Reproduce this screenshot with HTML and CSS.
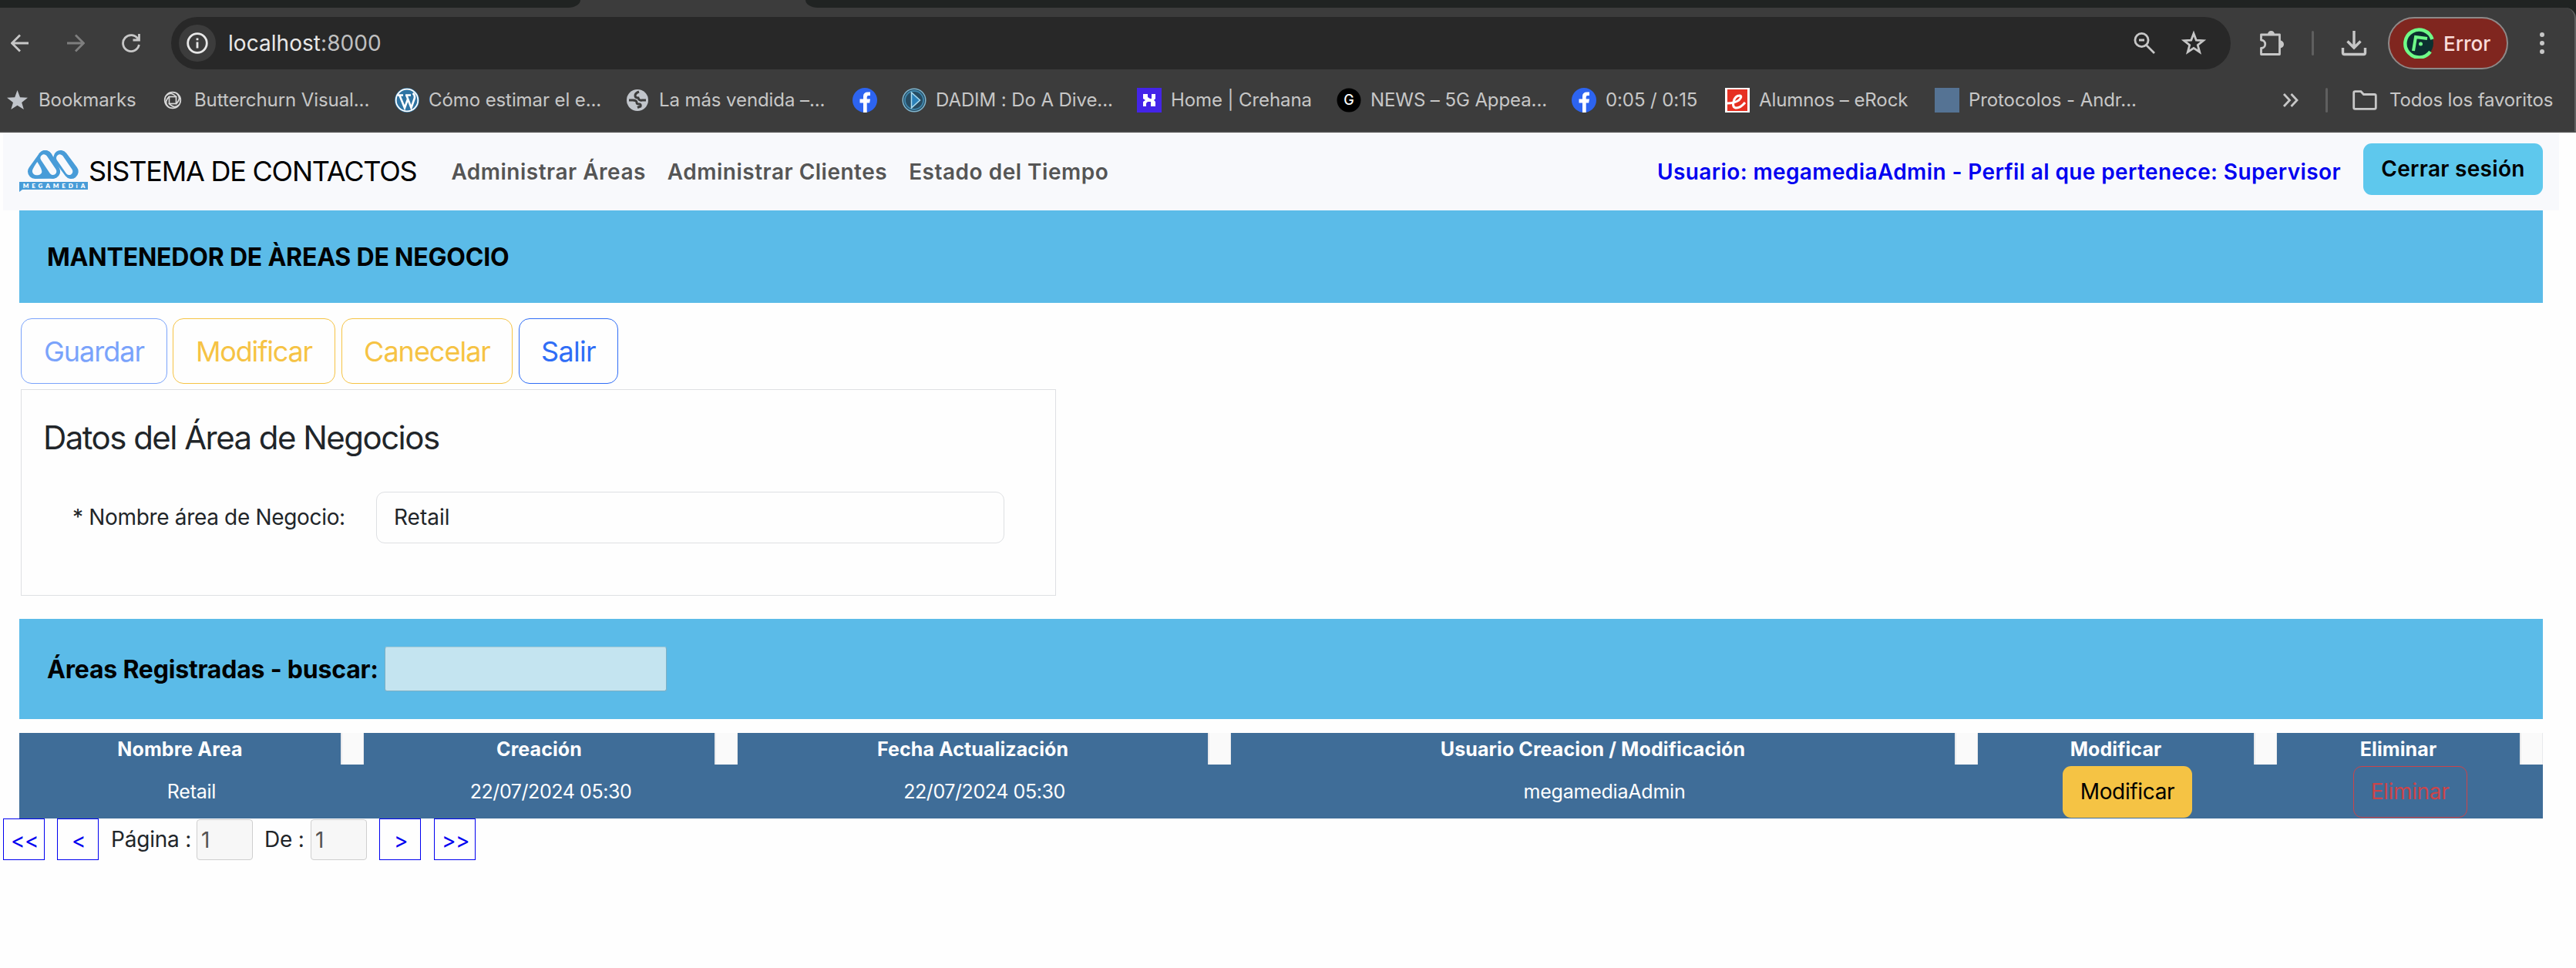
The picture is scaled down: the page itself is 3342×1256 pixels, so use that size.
FILE: index.html
```
<!DOCTYPE html>
<html lang="es">
<head>
<meta charset="utf-8">
<title>Sistema de Contactos</title>
<link rel="stylesheet" href="styles.css">
</head>
<body>
<header class="browser">
  <div class="tabs"><div class="tabs-left"></div><div class="tabs-right"></div></div>
  <div class="chrome">
    <div class="toolbar">
      <div class="nav-icon"><svg width="24" height="24" viewBox="0 0 24 24" class="line"><path d="M23 12H2M12 1.500 1.500 12 12 22.500"/></svg></div>
      <div class="nav-icon dim"><svg width="24" height="24" viewBox="0 0 24 24" class="line"><path d="M1 12H22M12 1.500 22.500 12 12 22.500"/></svg></div>
      <div class="nav-icon"><svg width="26" height="26" viewBox="0 0 26 26" class="line"><path d="M22 7.500A10.500 10.500 0 1 0 23.400 15M23.500 1V9H15.500"/></svg></div>
      <div class="omnibox">
        <div class="site-info"><svg width="28" height="28" viewBox="0 0 28 28"><circle cx="14" cy="14" r="12.300" fill="none" stroke="#e8e8e8" stroke-width="2.800"/><path d="M14 12.500V20.500M14 7.500V10.200" stroke="#e8e8e8" stroke-width="2.800"/></svg></div>
        <div class="url">localhost<span class="port">:8000</span></div>
        <div class="omni-icon"><svg width="30" height="30" viewBox="0 0 30 30" class="line"><circle cx="11.500" cy="11" r="8.600"/><path d="M17.500 17.500 28 28M8 11h7"/></svg></div>
        <div class="omni-icon"><svg width="34" height="34" viewBox="0 0 34 34" class="line"><path d="M17 4.500 20.300 13.200 29.500 13.700 22.300 19.500 24.700 28.500 17 23.400 9.300 28.500 11.700 19.500 4.500 13.700 13.700 13.200Z"/></svg></div>
      </div>
      <div class="ext"><svg width="36" height="38" viewBox="0 0 36 38" class="line"><path d="M4.500 8H28.500V33.500H4.500V25.500A5.200 5.200 0 0 0 4.500 15Z" stroke-linejoin="round"/><path d="M13 7.500a4.500 4.500 0 0 1 9 0ZM29 15.500a4.800 4.800 0 0 1 0 10Z" fill="#c7c7c7" stroke="none"/></svg></div>
      <div class="bar-sep"></div>
      <div class="download"><svg width="34" height="34" viewBox="0 0 34 34" class="line thick"><path d="M17 1V23M8.500 14.500 17 23 25.500 14.500M2.500 23V29.500Q2.500 31.500 4.500 31.500H29.500Q31.500 31.500 31.500 29.500V23"/></svg></div>
      <div class="profile">
        <svg width="40" height="40" viewBox="0 0 40 40"><circle cx="20" cy="20" r="19" fill="#0c3030"/><path d="M37.500 15A18 18 0 1 0 35 31" fill="none" stroke="#6ffb88" stroke-width="4.500"/><path d="M13 30 16 12 31 14" fill="none" stroke="#6ffb88" stroke-width="4"/><circle cx="22.500" cy="21" r="2.500" fill="#6ffb88"/></svg>
        <span>Error</span>
      </div>
      <div class="menu"><i></i><i></i><i></i></div>
    </div>
    <div class="bookmarks">
      <div class="bm"><svg width="32" height="32" viewBox="0 0 32 32"><path d="M14.500 3 18 12.300 28 12.700 20.200 18.900 22.900 28 14.500 22.700 6.300 28 9 18.900 1 12.700 11.200 12.300Z" fill="#c1c5cb"/></svg><span>Bookmarks</span></div>
      <div class="bm"><svg width="32" height="32" viewBox="0 0 32 32" fill="none" stroke="#d8d8d8" stroke-width="1.700"><circle cx="16" cy="16" r="10.300"/><rect x="11.500" y="11.500" width="9" height="9"/><path d="M8 10Q14 4 21 12M22 8Q28 14 20 21M24 22Q18 28 11 20M10 24Q4 18 12 11"/></svg><span>Butterchurn Visual...</span></div>
      <div class="bm"><svg width="32" height="32" viewBox="0 0 32 32"><circle cx="16" cy="16" r="16" fill="#2f74a3"/><circle cx="16" cy="16" r="14.300" fill="none" stroke="#fff" stroke-width="1.800"/><path d="M4 9.500H11M14 9.500H21M6.500 10 13 26 17.300 14M15.500 10 21.500 26 26 13Q26.500 9 23.500 7" fill="none" stroke="#fff" stroke-width="2.600"/></svg><span>Cómo estimar el e...</span></div>
      <div class="bm"><svg width="32" height="32" viewBox="0 0 32 32"><circle cx="16" cy="16" r="14" fill="#c1c5cb"/><path d="M5 16H10Q15 16 15 19 15 21 18 21 21 21 20 24L16 25.500" fill="none" stroke="#3c3c3c" stroke-width="3"/><path d="M18 5Q13 7 13 10 13 13 17 13 18 17 22 16L27 16" fill="none" stroke="#3c3c3c" stroke-width="3"/></svg><span>La más vendida –...</span></div>
      <div class="bm"><svg width="32" height="32" viewBox="0 0 32 32"><circle cx="16" cy="16" r="16" fill="#2d64f0"/><path d="M14 32V19.500H9.500V14.500H14V11Q14 5.500 20 5.500H23V10H20.700Q18.700 10 18.700 12V14.500H23L22.200 19.500H18.700V32Z" fill="#fff"/></svg></div>
      <div class="bm"><svg width="32" height="32" viewBox="0 0 32 32"><circle cx="16" cy="16" r="14.800" fill="#274b61" stroke="#80b6cf" stroke-width="1.500"/><circle cx="16" cy="16" r="12" fill="none" stroke="#3f87ad" stroke-width="1.800"/><path d="M12.500 6 23.500 16 12.500 26Z" fill="#2b80b8" stroke="#a9dcf2" stroke-width="1.500"/></svg><span>DADIM : Do A Dive...</span></div>
      <div class="bm"><svg width="32" height="32" viewBox="0 0 32 32"><path d="M0 0H32V32H0Z" fill="#4424e8"/><path d="M8 8H14V12L17 14H19V8H24V14L22 16 24 18V24H18V18H14L12 20V24H8V18L11 16 8 14Z" fill="#fff"/></svg><span>Home | Crehana</span></div>
      <div class="bm"><svg width="32" height="32" viewBox="0 0 32 32"><circle cx="16" cy="16" r="15.500" fill="#000"/><text x="16" y="22" text-anchor="middle" class="g-letter">G</text></svg><span>NEWS – 5G Appea...</span></div>
      <div class="bm"><svg width="32" height="32" viewBox="0 0 32 32"><circle cx="16" cy="16" r="16" fill="#2d64f0"/><path d="M14 32V19.500H9.500V14.500H14V11Q14 5.500 20 5.500H23V10H20.700Q18.700 10 18.700 12V14.500H23L22.200 19.500H18.700V32Z" fill="#fff"/></svg><span>0:05 / 0:15</span></div>
      <div class="bm"><svg width="32" height="32" viewBox="0 0 32 32"><path d="M0 0H32V32H0Z" fill="#fff"/><path d="M3 2H29V30H3Z" fill="#e63022"/><path d="M3 20Q12 20 18 16 23 11 19 10 13 10 11 18 9 26 15 26 20 26 26 19" fill="none" stroke="#fff" stroke-width="3"/></svg><span>Alumnos – eRock</span></div>
      <div class="bm"><svg width="32" height="32" viewBox="0 0 32 32"><path d="M0 0H32V32H0Z" fill="#557394"/></svg><span>Protocolos - Andr...</span></div>
      <div class="more"><svg width="22" height="20" viewBox="0 0 22 20" class="line"><path d="M2 2 9.500 10 2 18M11.500 2 19 10 11.500 18"/></svg></div>
      <div class="bar-sep"></div>
      <div class="bm all"><svg width="32" height="26" viewBox="0 0 32 26" class="line"><path d="M1.700 3.500Q1.700 1.700 3.500 1.700H11L14.500 5.500H28.500Q30.300 5.500 30.300 7.300V22.500Q30.300 24.300 28.500 24.300H3.500Q1.700 24.300 1.700 22.500Z"/></svg><span>Todos los favoritos</span></div>
    </div>
  </div>
</header>

<nav class="navbar">
  <svg class="logo" width="89" height="56" viewBox="0 0 267 168">
    <g stroke-linecap="round" stroke-linejoin="round" stroke="#489cd8" fill="#489cd8" stroke-width="56"><path d="M61 83 101 28 130 82Z"/><path d="M101 28 131 83M161 28 202 83" fill="none"/></g>
    <g stroke-linecap="round" stroke="#f8f9fc" stroke-width="28" fill="none"><path d="M96 30 131 82M158 30 194 82"/></g>
    <path d="M70 45Q55 66 51 78C47 101 85 103 88 84Q88 72 70 45Z" fill="#f8f9fc"/>
    <path d="M0 123H267V153H12L0 162Z" fill="#489cd8"/>
    <text x="14" y="147" textLength="242" class="logo-text">MEGAMEDiA</text>
  </svg>
  <span class="brand">SISTEMA DE CONTACTOS</span>
  <a class="nav-link">Administrar Áreas</a>
  <a class="nav-link">Administrar Clientes</a>
  <a class="nav-link">Estado del Tiempo</a>
  <span class="user">Usuario: megamediaAdmin - Perfil al que pertenece: Supervisor</span>
  <button class="logout">Cerrar sesión</button>
</nav>

<main>
  <h1 class="banner">MANTENEDOR DE ÀREAS DE NEGOCIO</h1>
  <div class="actions">
    <button class="btn-lg save">Guardar</button>
    <button class="btn-lg modify">Modificar</button>
    <button class="btn-lg cancel">Canecelar</button>
    <button class="btn-lg exit">Salir</button>
  </div>
  <section class="panel">
    <h2>Datos del Área de Negocios</h2>
    <div class="field"><label>* Nombre área de Negocio:</label><div class="text-input">Retail</div></div>
  </section>
  <div class="banner search"><span>Áreas Registradas - buscar:</span><div class="search-input"></div></div>
  <div class="table">
    <div class="row head"><div>Nombre Area</div><div>Creación</div><div>Fecha Actualización</div><div>Usuario Creacion / Modificación</div><div>Modificar</div><div>Eliminar</div></div>
    <div class="row body"><div>Retail</div><div class="date">22/07/2024 05:30</div><div class="date">22/07/2024 05:30</div><div>megamediaAdmin</div><div><button class="btn edit">Modificar</button></div><div><button class="btn delete">Eliminar</button></div></div>
  </div>
</main>
<footer class="pager">
  <button class="page">&lt;&lt;</button>
  <button class="page prev">&lt;</button>
  <span class="page-label">Página :</span><div class="page-input">1</div>
  <span class="of-label">De :</span><div class="page-input">1</div>
  <button class="page next">&gt;</button>
  <button class="page last">&gt;&gt;</button>
</footer>
</body>
</html>
```
FILE: styles.css
```
*{box-sizing:border-box}
body{margin:0;width:3342px;height:1256px;overflow:hidden;background:#fefefe;color:#212529;font-family:Inter,"Liberation Sans",sans-serif;font-size:28px;line-height:1.2;white-space:nowrap}
button{font:inherit;padding:0;margin:0;background:none;border:0;display:flex;align-items:center;justify-content:center;flex:none}
svg{display:block;flex:none}
h1,h2{margin:0}

/* browser window */
.browser{background:#202322}
.tabs{display:flex;justify-content:space-between;height:10px;background:#3c3c3c}
.tabs-left{width:753px;background:#202322;border-bottom-right-radius:16px 10px}
.tabs-right{width:2297px;background:#202322;border-bottom-left-radius:16px 10px}
.chrome{height:162px;background:#3c3c3c;border-bottom:2px solid #484848;border-right:2px solid #606060;border-top-right-radius:14px}
.line{fill:none;stroke:#c7c7c7;stroke-width:2.8}
.thick{stroke-width:3.4}
.toolbar{display:flex;align-items:center;height:80px;padding:12px 0 0 2px;width:3342px}
.nav-icon{width:48px;margin-right:24px;display:flex;justify-content:center}
.dim{opacity:.48}
.omnibox{display:flex;align-items:center;width:2672px;height:68px;margin-left:4px;padding:0 16px 0 10px;border-radius:34px;background:#282828}
.site-info{width:48px;height:48px;border-radius:50%;background:#3c3c3c;display:flex;align-items:center;justify-content:center}
.url{margin-left:16px;padding-top:1px;color:#e8e8e8;letter-spacing:.05px;margin-right:auto}
.port{color:#c0c0c0}
.omni-icon{width:64px;display:flex;justify-content:center}
.ext{width:105px;display:flex;justify-content:center}
.bar-sep{width:3px;height:32px;border-radius:2px;background:#5f5f5f;flex:none}
.download{width:88px;margin-left:8px;display:flex;justify-content:center}
.profile{width:156px;height:68px;border:2px solid #8e8988;border-radius:34px;background:#80261f;color:#fadcda;display:flex;align-items:center;gap:12px;padding-left:18px;font-size:26px;font-weight:500}
.profile span{padding-top:1px}
.menu{width:88px;display:flex;flex-direction:column;align-items:center;gap:5px}
.menu i{width:6px;height:6px;border-radius:50%;background:#c7c7c7}
.bookmarks{display:grid;grid-template-columns:200px 304px 299px 295px 64px 305px 259px 305px 199px 272px 437px 70px 35px 300px;align-items:center;height:80px;padding-left:8px;width:3342px;color:#c7c7c7;font-size:24px;letter-spacing:-.09px}
.bm{display:flex;align-items:center;gap:12px}
.bm:first-child{gap:10px}
.all{gap:16px;letter-spacing:-.15px}
.more{padding-left:14px}
.g-letter{font:500 18px Inter,sans-serif;fill:#fff}

/* application navbar */
.navbar{display:flex;align-items:center;height:101px;width:3316px;margin-left:4px;padding:0 21px;background:#f8f9fc}
.logo-text{font:800 24px Lato,sans-serif;fill:#fff}
.brand{color:#000;font-size:36px;letter-spacing:-1.22px;margin-left:1px;margin-right:45px}
.nav-link{color:#555;font-weight:600;letter-spacing:.5px;margin-right:28px;padding-top:2px}
.user{margin-left:auto;color:#0000f0;font-weight:600;letter-spacing:.39px;margin-right:29px;padding-top:2px}
.logout{width:233px;height:67px;margin-bottom:6px;padding-top:1px;border-radius:11px;background:#5ec8ed;color:#000;font-weight:600;letter-spacing:.3px}

/* content */
main{width:3274px;margin-left:25px}
.banner{display:flex;align-items:center;height:120px;padding:2px 0 0 36px;background:#5bbbe8;color:#000;font-size:32px;font-weight:700;letter-spacing:-.2px}
.actions{display:flex;gap:7px;height:112px;padding:20px 0 0 2px}
.btn-lg{height:85px;padding-top:2px;border:1.5px solid;border-radius:14px;font-size:36px;letter-spacing:-1px}
.save{width:190px;color:#7aa3fb}
.modify{width:211px;color:#f6c344;letter-spacing:-1.18px}
.cancel{width:222px;color:#f6c344;margin-left:1px}
.exit{width:129px;color:#2f6df6;margin-left:1px;letter-spacing:-.7px}
.panel{width:1343px;height:268px;margin-left:2px;border:1.5px solid #dee0e3;padding-top:37px}
.panel h2{font-size:42px;font-weight:400;letter-spacing:-1.54px;padding-left:28px;margin-bottom:45px}
.field{display:flex;align-items:center;padding-left:66px}
.field label{width:394px;letter-spacing:-.33px}
.text-input{width:815px;height:67px;border:1.5px solid #dee0e3;border-radius:11px;display:flex;align-items:center;padding-left:22px}
.search{height:130px;margin-top:30px;padding-top:0}
.search span{padding-top:2px}
.search-input{width:366px;height:58px;margin-left:8px;border:1px solid #7dafc4;border-top-color:#a5c9d6;border-radius:3px;background:#c4e4f0}
.table{margin-top:18px;background:#3f6d98;color:#fff;font-size:25px}
.row{display:grid;grid-template-columns:447px 485px 640px 969px 388px 345px}
.row>div{display:flex;align-items:center;justify-content:center}
.head{height:41px;font-weight:700;letter-spacing:.1px}
.head>div{padding-right:30px;background:linear-gradient(90deg,#e9eaec 2px,#fafafa 2px,#fafafa 29px,#e9eaec 29px) right/30px 100% no-repeat}
.body{height:70px;letter-spacing:-.22px}
.date{letter-spacing:-.42px}
.btn{height:67px;padding-top:1px;border-radius:11px;font-size:28px;letter-spacing:-.35px}
.edit{width:168px;background:#f5c344;color:#000}
.delete{width:148px;border:1.5px solid #cb444a;color:#cb444a}

/* pagination */
.pager{display:flex;align-items:center;height:54px;padding-left:4px;letter-spacing:-.2px}
.page{width:54px;height:54px;border:1.5px solid #0000f0;color:#0000f0;letter-spacing:-.5px;padding:6px 0 0 2px}
.prev{margin-left:16px}
.page-label{width:127px;padding:2px 0 0 16px}
.of-label{width:75px;padding:2px 0 0 15px}
.page-input{width:73px;height:53px;border:1.5px solid #cfcfcf;border-radius:4px;background:#f7f7f7;color:#545454;padding:10px 0 0 5px}
.next{margin-left:16px}
.last{margin-left:17px}
```
